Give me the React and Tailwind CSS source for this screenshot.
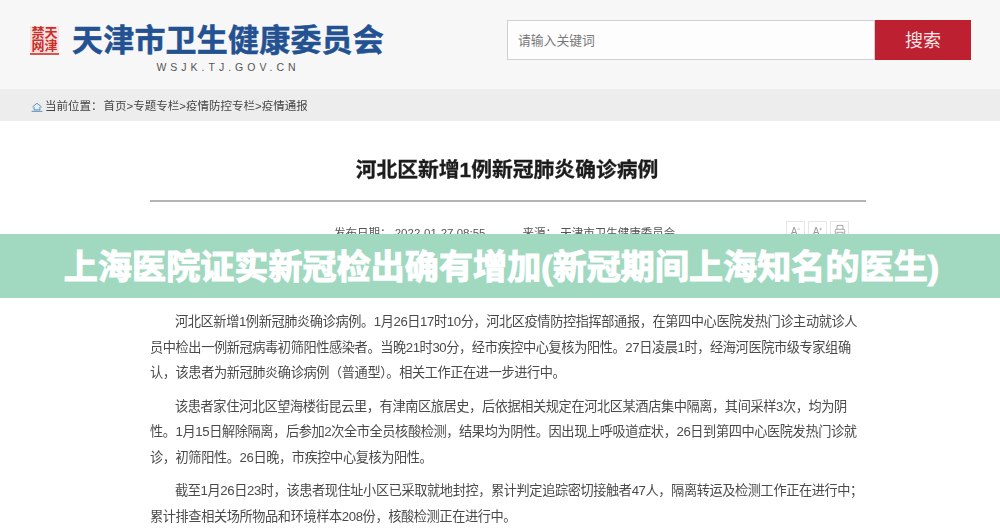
const cjk = { fontFamily: '"Liberation Sans", "Noto Sans CJK SC", sans-serif' };

const paragraphs = [
  {
    gap: 'mt-0',
    lines: [
      '河北区新增1例新冠肺炎确诊病例。1月26日17时10分，河北区疫情防控指挥部通报，在第四中心医院发热门诊主动就诊人',
      '员中检出一例新冠病毒初筛阳性感染者。当晚21时30分，经市疾控中心复核为阳性。27日凌晨1时，经海河医院市级专家组确',
      '认，该患者为新冠肺炎确诊病例（普通型）。相关工作正在进一步进行中。',
    ],
  },
  {
    gap: 'mt-2',
    lines: [
      '该患者家住河北区望海楼街昆云里，有津南区旅居史，后依据相关规定在河北区某酒店集中隔离，其间采样3次，均为阴',
      '性。1月15日解除隔离，后参加2次全市全员核酸检测，结果均为阴性。因出现上呼吸道症状，26日到第四中心医院发热门诊就',
      '诊，初筛阳性。26日晚，市疾控中心复核为阳性。',
    ],
  },
  {
    gap: 'mt-2',
    lines: [
      '截至1月26日23时，该患者现住址小区已采取就地封控，累计判定追踪密切接触者47人，隔离转运及检测工作正在进行中；',
      '累计排查相关场所物品和环境样本208份，核酸检测正在进行中。',
    ],
  },
];

function HomeIcon({ className }) {
  return (
    <svg viewBox="0 0 14 12" fill="none" stroke="currentColor" strokeWidth="1" className={className}>
      <path d="M1.5 6 7 1.5 12.5 6" />
      <path d="M3.5 6v3.5h7V6" />
      <path d="M0.5 11.2h13" />
    </svg>
  );
}

function PrintIcon({ className }) {
  return (
    <svg viewBox="0 0 14 16" fill="none" stroke="currentColor" strokeWidth="1" className={className}>
      <path d="M3.5 6V1.5h7V6" />
      <rect x="1.5" y="6" width="11" height="6" rx="1" />
      <rect x="3.5" y="9.5" width="7" height="5" />
    </svg>
  );
}

function Seal() {
  return (
    <div className="flex h-[29px] w-[29px] flex-col items-center justify-between bg-[#f8e2e0] text-[#c9302c]">
      <div className="grid grid-cols-2 text-[13px] leading-[13px] font-bold">
        <span>禁</span>
        <span>天</span>
        <span>网</span>
        <span>津</span>
      </div>
      <div className="h-[2px] w-full bg-[#d9534f]" />
    </div>
  );
}

export default function App() {
  return (
    <div className="relative h-[532px] w-[1000px] overflow-hidden bg-white" style={cjk}>
      <div className="blur-[0.5px]">
        <header className="flex h-[89px] items-start justify-between bg-[#f7f7f7] pt-[20px] pr-[29px] pl-[30px]">
          <div className="flex items-start gap-[13px] pt-[6px]">
            <Seal />
            <div className="flex flex-col items-center">
              <h1 className="-mt-[4px] text-[31px] leading-[38px] font-bold tracking-[0.2px] whitespace-nowrap text-[#235191] [-webkit-text-stroke:0.5px_#235191]">
                天津市卫生健康委员会
              </h1>
              <p className="mt-[0px] text-[10.5px] leading-[14px] tracking-[4px] text-[#555555]">WSJK.TJ.GOV.CN</p>
            </div>
          </div>
          <div className="flex h-[40px] w-[464px]">
            <div className="flex flex-1 items-center border border-[#d0d0d0] bg-[#fdfdfd] pt-[2px] pl-[10px] text-[12.8px] text-[#777777]">
              请输入关键词
            </div>
            <button className="w-[96px] bg-[#bd2031] pt-[3px] text-[18px] text-[#fbe4e4]">搜索</button>
          </div>
        </header>

        <nav className="flex h-[32px] items-center gap-[2px] bg-[#ededed] pt-[3px] pl-[31px] text-[11.5px] text-[#444444]">
          <HomeIcon className="h-[10px] w-[12px] text-[#3b82b5]" />
          <span>当前位置：</span>
          <span className="-ml-[1px]">首页&gt;专题专栏&gt;疫情防控专栏&gt;疫情通报</span>
        </nav>

        <main className="px-[150px]">
          <h2 className="mt-[34px] pl-[14px] text-center text-[20.8px] leading-[30px] font-bold text-[#1c1c1c] [-webkit-text-stroke:0.3px_#1c1c1c]">
            河北区新增1例新冠肺炎确诊病例
          </h2>
          <div className="mt-[15px] h-[2px] w-[716px] bg-[#b4b4b4]" />
          <div className="relative mt-[22px] flex h-[20px] items-center pl-[184px] text-[11.5px] text-[#555555]">
            <span>发布日期： 2022-01-27 08:55</span>
            <span className="ml-[37px]">来源： 天津市卫生健康委员会</span>
            <div className="absolute top-[-3px] left-[636px] flex gap-[3px] text-[#999999]">
              <span className="flex h-[20px] w-[19px] items-center justify-center border border-[#e6e6e6] text-[10px]">A⁻</span>
              <span className="flex h-[20px] w-[19px] items-center justify-center border border-[#e6e6e6] text-[10px]">A⁺</span>
              <span className="flex h-[20px] w-[19px] items-center justify-center border border-[#e6e6e6]">
                <PrintIcon className="h-[14px] w-[12px]" />
              </span>
            </div>
          </div>

          <article className="mt-[65px] text-[13.2px] leading-[25.5px] tracking-[-0.4px] whitespace-nowrap text-[#4a4a4a]">
            {paragraphs.map((p, i) => (
              <div key={i} className={p.gap}>
                {p.lines.map((line, j) => (
                  <p key={j} className={j === 0 ? 'pl-[25px]' : ''}>
                    {line}
                  </p>
                ))}
              </div>
            ))}
          </article>
        </main>
      </div>

      <div className="absolute top-[234px] left-0 flex h-[64px] w-full items-center justify-center bg-[#a0d9c0] pt-[3px] pl-[3px]">
        <span className="text-[34px] font-bold tracking-[0.1px] whitespace-nowrap text-white [-webkit-text-stroke:1.2px_white]">
          上海医院证实新冠检出确有增加(新冠期间上海知名的医生)
        </span>
      </div>
    </div>
  );
}
